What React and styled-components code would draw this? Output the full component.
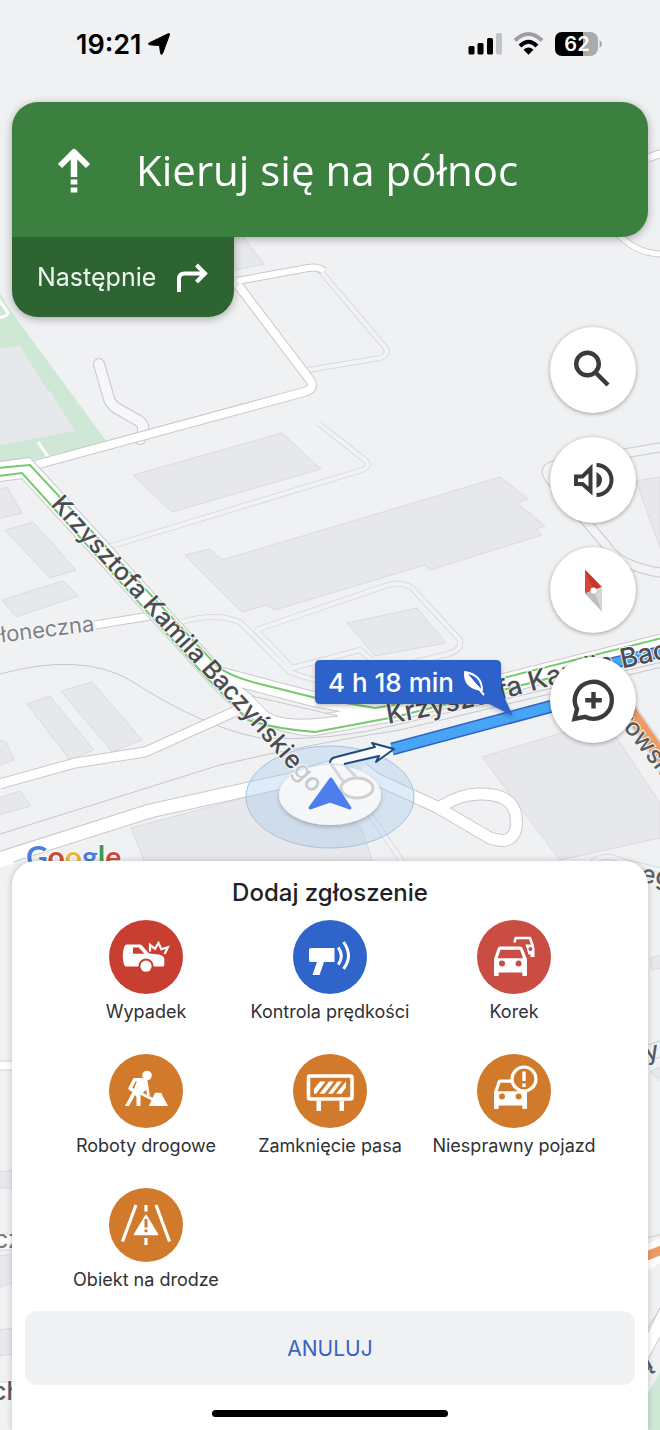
import styled, { createGlobalStyle } from "styled-components"

const GlobalStyle = createGlobalStyle`
    * {
        box-sizing: border-box;
    }
    body {
        margin: 0;
        background-color: #f0f1f3;
        font-family: Inter, "Liberation Sans", sans-serif;
    }
    h1, h2, p, ul {
        margin: 0;
        padding: 0;
        font-weight: normal;
    }
`

const Screen = styled.main`
    min-height: 100vh;
    display: flex;
    flex-direction: column;
    position: relative;
    overflow: hidden;
`

const MapLayer = styled.svg`
    position: absolute;
    top: 0;
    left: 0;
    width: 100%;
    height: 100%;
    z-index: -1;
`

const StatusBar = styled.header`
    height: 102px;
    padding: 0 58px 14px 76px;
    display: flex;
    align-items: center;
    justify-content: space-between;
    color: #000;
`

const StatusGroup = styled.div`
    display: flex;
    align-items: center;
    gap: 6px;
`

const Clock = styled.time`
    font-size: 27px;
    font-weight: 600;
`

const Directions = styled.section`
    margin: 0 12px;
    filter: drop-shadow(0 2px 4px rgba(0, 0, 0, 0.3));
`

const Maneuver = styled.div`
    height: 135px;
    padding: 0 24px 0 44px;
    display: flex;
    align-items: center;
    gap: 44px;
    border-radius: 26px 26px 26px 0;
    background-color: #3c8040;
    color: #fff;
`

const Instruction = styled.h1`
    font-family: "Open Sans", "Noto Sans", sans-serif;
    font-size: 42px;
    line-height: 52px;
`

const NextStep = styled.div`
    width: fit-content;
    height: 80px;
    padding: 0 24px 0 25px;
    display: flex;
    align-items: center;
    gap: 16px;
    border-radius: 0 0 26px 26px;
    background-color: #2e6432;
    color: #f1f8f1;
    font-size: 25px;
`

const MapControls = styled.nav`
    margin: 10px 24px 24px;
    display: flex;
    flex-direction: column;
    align-items: flex-end;
    gap: 24px;
`

const RoundButton = styled.button`
    width: 86px;
    height: 86px;
    padding: 0;
    border: none;
    border-radius: 50%;
    background-color: #fff;
    color: #3a3b3d;
    cursor: pointer;
    box-shadow: 0 1px 4px rgba(0, 0, 0, 0.35);
    svg {
        display: block;
    }
`

const Sheet = styled.section`
    margin: auto 12px 0;
    padding: 16px 13px 13px;
    display: flex;
    flex-direction: column;
    border-radius: 24px 24px 0 0;
    background-color: #fff;
    box-shadow: 0 0 6px rgba(0, 0, 0, 0.2);
`

const SheetTitle = styled.h2`
    font-size: 24px;
    line-height: 32px;
    font-weight: 500;
    text-align: center;
    color: #202124;
`

const ReportGrid = styled.ul`
    margin: 11px 29px 20px;
    display: grid;
    grid-template-columns: repeat(3, 1fr);
    row-gap: 31px;
    list-style: none;
`

const ReportButton = styled.button`
    width: 100%;
    padding: 0;
    border: none;
    background: none;
    display: flex;
    flex-direction: column;
    align-items: center;
    gap: 7px;
    font-family: inherit;
    font-size: 18px;
    line-height: 22px;
    white-space: nowrap;
    color: #303134;
    cursor: pointer;
`

const ReportIcon = styled.span`
    width: 74px;
    height: 74px;
    border-radius: 50%;
    background-color: ${props => props.$bg};
    color: ${props => props.$bg};
    svg {
        display: block;
    }
`

const CancelButton = styled.button`
    height: 74px;
    border: none;
    border-radius: 12px;
    background-color: #f0f1f3;
    color: #3863c2;
    font-family: inherit;
    font-size: 21px;
    text-transform: uppercase;
    cursor: pointer;
`

const HomeIndicator = styled.div`
    width: 236px;
    height: 7px;
    margin: 25px auto 0;
    border-radius: 4px;
    background-color: #000;
`

const buildings = [
    "235,238 244,238 264,264 235,270",
    "133,475 282,433 321,469 172,512",
    "185,555 210,549 222,560 500,477 528,499 517,503 545,526 536,529 542,535 430,570 425,565 275,610 267,605 242,612",
    "347,623 417,608 446,643 375,656",
    "482,757 605,720 660,803 660,838 560,860",
    "636,481 660,477 660,548",
    "-2,490 7,487 22,513 -2,519",
    "5,530 33,522 76,570 50,578",
    "2,600 63,581 78,596 16,617",
    "27,704 50,696 94,750 70,760",
    "61,691 92,682 142,740 112,752",
    "-2,798 20,791 31,806 -2,815",
    "-2,740 6,742 14,760 -2,766",
    "131,828 300,783 362,828 375,870 148,870",
    "650,958 662,955 662,968 652,970",
    "650,1072 662,1066 662,1082",
    "-2,1172 14,1170 14,1188 -2,1188",
    "-2,1256 14,1254 14,1282 -2,1288",
    "-2,1330 14,1328 14,1354 -2,1356",
]

// narrow service roads, drawn as two thin lines
const lanes = [
    "M318 268 L384 346 Q391 354 380 358 L308 370",
    "M318 423 L365 460 Q372 466 362 470 L105 548",
    "M182 622 Q215 612 240 622 L290 672 Q320 684 345 682",
    "M256 630 L385 586 Q400 580 412 588 L460 640 Q462 650 448 654 L375 672",
    "M256 630 L292 668 L360 650 L372 660",
    "M335 770 L360 800 L408 870",
    "M590 866 Q600 850 625 862 L660 870",
]

const roads = [
    { d: "M237 281 L308 268 Q318 266 324 271", w: 6 },
    { d: "M238 285 L310 380 Q316 389 304 392 L35 465", w: 8 },
    { d: "M648 158 L662 153", w: 7 },
    { d: "M616 232 Q636 254 662 254", w: 5 },
    { d: "M95 625 L150 616", w: 7 },
    { d: "M0 784 L75 763 L145 752 L236 711", w: 9 },
    { d: "M-4 860 L150 811 L290 780 L345 763", w: 13 },
    { d: "M362 768 L376 779 L437 807 L490 838 Q512 846 516 828 Q520 794 482 794 Q462 793 440 807", w: 11 },
]

const rails = [
    "M0 674 Q80 652 130 680 Q200 726 260 738 Q330 742 400 724 L662 662",
    "M0 834 L220 765 Q320 742 400 730 L662 667",
    "M640 1066 L662 1056 M640 1048 L662 1040 M640 1240 L662 1234 M646 1330 L662 1306",
]

const MapView = () => (
    <MapLayer viewBox="0 0 660 1430" preserveAspectRatio="xMidYMin slice" aria-hidden="true">
        <defs>
            <path id="street-down" d="M50 505 L206 676 Q250 722 365 855" />
            <path id="street-up" d="M388 724 Q450 713 508 698 Q580 676 700 652" />
            <filter id="puck-shadow" x="-20%" y="-20%" width="140%" height="150%">
                <feDropShadow dx="0" dy="2" stdDeviation="2" floodOpacity="0.25" />
            </filter>
        </defs>
        <rect width="660" height="1430" fill="#f0f1f3" />
        <path d="M-2 290 L10 310 L107 442 L-2 468 Z" fill="#cfe7d5" />
        <path d="M-2 349 L20 346 L47 390 L50 391 L75 431 L-2 446 Z" fill="#e7e8eb" />
        <path d="M-2 298 L8 313 Q8 316 -2 318 M38 442 L51 461" fill="none" stroke="#fff" strokeWidth="3" />
        <g fill="#e7e8eb" stroke="#dadbdf">
            {buildings.map(points => <polygon key={points} points={points} />)}
        </g>
        <g fill="none" stroke="#c6c7cb">
            {rails.map(d => <path key={d} d={d} />)}
        </g>
        <g fill="none" strokeLinejoin="round">
            {lanes.map(d => <path key={d} d={d} stroke="#d9dbdf" strokeWidth="6" />)}
            {lanes.map(d => <path key={d + "fill"} d={d} stroke="#f2f3f5" strokeWidth="4" />)}
        </g>
        <g fill="none" strokeLinejoin="round">
            <path d="M99 364 L109 399 Q111 405 118 409 L139 421 Q147 427 140 439" stroke="#c8c9cd" strokeWidth="12" strokeLinecap="round" />
            <path d="M99 364 L109 399 Q111 405 118 409 L139 421 Q147 427 140 439" stroke="#f6f7f8" strokeWidth="10" strokeLinecap="round" />
            <path d="M662 447 L552 466 Q543 469 549 478 L606 545 Q618 566 662 573" stroke="#c8c9cd" strokeWidth="10" />
            <path d="M662 447 L552 466 Q543 469 549 478 L606 545 Q618 566 662 573" stroke="#f2f3f5" strokeWidth="8" />
            {roads.map(({ d, w }) => <path key={d} d={d} stroke="#c8c9cd" strokeWidth={w + 2} />)}
            {roads.map(({ d, w }) => <path key={d + "fill"} d={d} stroke="#fff" strokeWidth={w} />)}
        </g>

        <path d="M-4 472 L26 468 L215 675 Q255 722 312 726 L390 712 L662 644" fill="none" stroke="#c8c9cd" strokeWidth="21" />
        <path d="M218 674 L313 699 L385 712" fill="none" stroke="#c8c9cd" strokeWidth="16" />
        <path d="M-4 472 L26 468 L215 675 Q255 722 312 726 L390 712 L662 644" fill="none" stroke="#fff" strokeWidth="19" />
        <path d="M218 674 L313 699 L385 712" fill="none" stroke="#fff" strokeWidth="14" />
        <path d="M252 696 L338 716 Q285 724 268 712 Z" fill="#f0f1f3" stroke="#c8c9cd" />
        <g fill="none" stroke="#74cb6e" strokeWidth="2">
            <path d="M-2 468 L30 465 L216 665 Q228 676 260 684 L316 698 L375 708 L400 704 L662 638" />
            <path d="M-2 476 L22 473 L206 677 L248 720 Q275 729 315 732 L395 717 L662 650" />
        </g>
        <path d="M-4 862 L12 857" stroke="#fff" strokeWidth="13" />

        <path d="M392 749 L560 704" stroke="#2f62c4" strokeWidth="13" />
        <path d="M392 749 L560 704" stroke="#48a5f5" strokeWidth="10" />
        <path d="M600 666 L664 651" stroke="#2f62c4" strokeWidth="12" />
        <path d="M600 666 L664 651" stroke="#48a5f5" strokeWidth="9" />

        <path d="M622 700 L668 766" stroke="#d9d9dc" strokeWidth="17" />
        <path d="M622 700 L668 766" stroke="#ee9a62" strokeWidth="13" />
        <path d="M640 1262 L664 1248" stroke="#fff" strokeWidth="22" />
        <path d="M644 1257 L664 1249" stroke="#ee9a62" strokeWidth="9" />
        <path d="M644 1366 L664 1330 L664 1300 L644 1340 Z" fill="#fff" stroke="#c8c9cd" />
        <path d="M644 1400 L664 1366 V1432 H644 Z" fill="#cfe7d5" />
        <path d="M-2 1061 H14 V1070 H-2 Z M-2 1234 H14 V1250 H-2 Z M-2 1382 H14 V1398 H-2 Z" fill="#fff" stroke="#d0d1d5" />

        <ellipse cx="330" cy="797" rx="84" ry="51" fill="#a8cbec" fillOpacity="0.38" stroke="#a5c1df" />
        <ellipse cx="330" cy="795" rx="51" ry="30" fill="#f9fafb" fillOpacity="0.93" filter="url(#puck-shadow)" />
        <g fill="none">
            <path d="M331 764 L345 784 M344 764 L356 777" stroke="#d5d6d9" strokeWidth="3" />
            <ellipse cx="357" cy="788" rx="16" ry="10" stroke="#cfd0d3" strokeWidth="3" fill="#fafafa" />
        </g>
        <path d="M330 763 Q330 758 336 757 L375 747 L372 743 L394 749 L376 762 L379 756 L344 764" fill="#fff" fillOpacity="0.85" stroke="#1f4b7c" strokeWidth="2" strokeLinejoin="round" />

        <g fontFamily='Inter, "Liberation Sans", sans-serif' fontSize="25" fontWeight="500" stroke="#f7f8f9" strokeWidth="2" paintOrder="stroke">
            <text fill="#4a4c50">
                <textPath href="#street-down">Krzysztofa Kamila Baczyńskie<tspan fill="#c9cacd">go</tspan></textPath>
            </text>
            <text fontSize="27" fill="#4a4c50">
                <textPath href="#street-up">Krzysztofa Kamila Bac</textPath>
            </text>
            <text x="95" y="631" textAnchor="end" fontSize="22" fontWeight="400" fill="#7d8084" transform="rotate(-7 95 631)">Słoneczna</text>
            <text x="617" y="720" fill="#5b5d61" transform="rotate(52 617 720)">rowska</text>
            <text x="640" y="882" fill="#5b5d61" transform="rotate(8 640 882)">eg</text>
            <text x="640" y="1062" fill="#5b5d61" transform="rotate(-12 640 1062)">ły</text>
            <text x="-6" y="1248" fontWeight="400" fill="#77797d">cz</text>
            <text x="-8" y="1400" fill="#5b5d61">ch</text>
            <text x="642" y="1374" fill="#5b5d61" transform="rotate(-30 642 1374)">ą</text>
        </g>
        <text x="26" y="868" fontFamily="Lato, sans-serif" fontSize="30" fontWeight="700" stroke="#fff" strokeWidth="2" paintOrder="stroke">
            <tspan fill="#4a7fe0">G</tspan>
            <tspan fill="#d0493c">o</tspan>
            <tspan fill="#e8b93c">o</tspan>
            <tspan fill="#4a7fe0">g</tspan>
            <tspan fill="#3f9a55">l</tspan>
            <tspan fill="#d0493c">e</tspan>
        </text>

        <path d="M331 779 L350 808 L330 801 L310 808 Z" fill="#4d7fec" stroke="#4d7fec" strokeWidth="3" strokeLinejoin="round" />

        <g filter="url(#puck-shadow)">
            <path d="M320 660 H496 Q501 660 501 665 V690 L513 716 L489 704 H320 Q315 704 315 699 V665 Q315 660 320 660 Z" fill="#2f62cb" />
        </g>
        <text x="328" y="692" fontFamily='Inter, "Liberation Sans", sans-serif' fontSize="26" fontWeight="500" fill="#fff">4 h 18 min</text>
        <path d="M465 672 Q482 675 482 690 Q464 688 465 672 Z M466 673 L484 695" fill="none" stroke="#fff" strokeWidth="2" strokeLinejoin="round" />
        <path d="M465 672 Q464 688 482 690 Z" fill="#fff" />
    </MapLayer>
)

const CarFront = ({ x = 0, y = 0 }) => (
    <g transform={`translate(${x} ${y})`}>
        <path fill="#fff" fillRule="evenodd" d="M23 26.5 H43 Q45 26.5 45.7 28.5 L50 39 V55 Q50 56 49 56 H46.3 Q45.3 56 45.3 55 V52.6 H21.7 V55 Q21.7 56 20.7 56 H18 Q17 56 17 55 V39 L20.6 28.5 Q21.3 26.5 23 26.5 Z M23.6 29.8 L20.6 38.2 H46 L43 29.8 Z" />
        <circle cx="25" cy="43.6" r="3" fill="currentColor" />
        <circle cx="41.6" cy="43.6" r="3" fill="currentColor" />
    </g>
)

const CrashIcon = () => (
    <svg width="74" height="74" viewBox="0 0 74 74" fill="none">
        <path fill="#fff" d="M17 24.5 H31 Q32 24.5 33 25.5 L40 33.5 L50 34.5 Q55 35.5 55.3 39 V45 Q55.3 46.6 53.5 46.6 H17 Q14 46 13.8 36 Q14 26.5 17 24.5 Z" />
        <path fill="currentColor" d="M24 27.6 H29.6 L35.5 33.8 H24 Z" />
        <circle cx="37" cy="46.2" r="7.6" fill="currentColor" />
        <circle cx="37" cy="46.2" r="5.6" fill="#fff" />
        <path stroke="#fff" strokeWidth="2.2" d="M41 31.5 V24.8 L46 28.8 L49.5 23 L52.3 29.2 L58.8 27.2 L55.6 34" />
    </svg>
)

const SpeedGunIcon = () => (
    <svg width="74" height="74" viewBox="0 0 74 74" fill="none">
        <path fill="#fff" d="M18 28 H41.5 V42 H31 L26.5 55 H19.5 L24 42 H18 Q16 42 16 40 V30 Q16 28 18 28 Z" />
        <path stroke="#fff" strokeWidth="3" d="M45.2 27.5 Q51.5 36 45.2 44.5 M50.5 22 Q60.5 36 50.5 48.8" />
    </svg>
)

const TrafficIcon = () => (
    <svg width="74" height="74" viewBox="0 0 74 74" fill="none">
        <path stroke="#fff" strokeWidth="2.6" strokeLinejoin="round" d="M37.6 22.5 L38.6 18 H53 L56 27" />
        <path fill="#fff" d="M48.5 24.5 H55.6 L57.5 28 V37 H53.5 V34.5 H51.5 Z" />
        <circle cx="53.4" cy="29" r="2" fill="currentColor" />
        <CarFront />
    </svg>
)

const RoadworksIcon = () => (
    <svg width="74" height="74" viewBox="0 0 74 74" fill="none">
        <circle cx="38" cy="21.5" r="4.8" fill="#fff" />
        <path stroke="#fff" strokeWidth="3.4" strokeLinejoin="round" strokeLinecap="round" d="M33 25.8 H25.5 L21 34.5 L26 37.5" />
        <path fill="#fff" d="M29 24.5 L38.5 25.5 L38 35 L31.5 41 V52 H27.5 V43 L26 41 L20 52 H16 L24.5 36 Z" />
        <path stroke="#fff" strokeWidth="2.6" d="M37.5 28 L39.5 42 M31 39 L47 47" />
        <path fill="#fff" d="M40 52 L46 38.7 H52 L59 52 Z" />
    </svg>
)

const BarrierIcon = () => (
    <svg width="74" height="74" viewBox="0 0 74 74" fill="none">
        <rect x="15.5" y="22" width="43.5" height="23" rx="1.5" stroke="#fff" strokeWidth="3.6" />
        <path fill="#fff" d="M21 39.8 V35 L27 27.5 H32.5 L23 39.8 Z M26.5 39.8 L36 27.5 H41 L31.5 39.8 Z M35 39.8 L44.5 27.5 H49 L39.5 39.8 Z M43 39.8 L53 27.5 V33.5 L48.5 39.8 Z M23.5 47 H28 V57 H23.5 Z M46.5 47 H51 V57 H46.5 Z" />
    </svg>
)

const BreakdownIcon = () => (
    <svg width="74" height="74" viewBox="0 0 74 74" fill="none">
        <CarFront x={0} y={-1} />
        <circle cx="47" cy="25" r="12" fill="currentColor" stroke="#fff" strokeWidth="3.2" />
        <path fill="#fff" d="M45.3 17.5 H48.7 V27 H45.3 Z M45.3 29.6 H48.7 V33 H45.3 Z" />
    </svg>
)

const ObstacleIcon = () => (
    <svg width="74" height="74" viewBox="0 0 74 74" fill="none">
        <path stroke="#fff" strokeWidth="3.2" d="M27 17 L13.5 53.5 M47 17 L60.5 53.5 M37 17 V23.5 M37 50 V57" />
        <path fill="#fff" stroke="#fff" strokeWidth="1.6" strokeLinejoin="round" d="M37 27.5 L48.5 46.5 H25.5 Z" />
        <path fill="currentColor" d="M35.5 31 H38.5 V39.5 H35.5 Z M35.5 41.5 H38.5 V44.3 H35.5 Z" />
    </svg>
)

const reports = [
    { label: "Wypadek", bg: "#c83e31", Icon: CrashIcon },
    { label: "Kontrola prędkości", bg: "#2f64cb", Icon: SpeedGunIcon },
    { label: "Korek", bg: "#c94d42", Icon: TrafficIcon },
    { label: "Roboty drogowe", bg: "#d27a2b", Icon: RoadworksIcon },
    { label: "Zamknięcie pasa", bg: "#d27a2b", Icon: BarrierIcon },
    { label: "Niesprawny pojazd", bg: "#d27a2b", Icon: BreakdownIcon },
    { label: "Obiekt na drodze", bg: "#d27a2b", Icon: ObstacleIcon },
]

const StatusIcons = () => (
    <svg width="134" height="26" viewBox="0 0 134 26" aria-hidden="true">
        <rect x="0.5" y="15" width="6" height="8.5" rx="1.5" />
        <rect x="9.5" y="12" width="6" height="11.5" rx="1.5" />
        <rect x="19" y="7" width="6" height="16.5" rx="1.5" />
        <rect x="28" y="2" width="6" height="21.5" rx="1.5" fill="#c3c4c6" />
        <g fill="none" strokeWidth="4">
            <path d="M47 9.5 Q60.5 -3.5 74 9.5" stroke="#9c9da0" />
            <path d="M52 15 Q60.5 6.5 69 15" stroke="#000" />
        </g>
        <path d="M55.5 18.8 Q60.5 14 65.5 18.8 L60.5 23.8 Z" />
        <rect x="87" y="1" width="43" height="24" rx="7.5" fill="#a9aaac" />
        <path d="M94.5 1 H115 V25 H94.5 Q87 25 87 17.5 V8.5 Q87 1 94.5 1 Z" />
        <path d="M131.5 9 Q134 10.5 134 13 Q134 15.5 131.5 17 Z" fill="#a9aaac" />
        <text x="109" y="20" textAnchor="middle" fontSize="20" fontWeight="600" fill="#fff">62</text>
    </svg>
)

const App = () => {
    return (
        <Screen>
            <GlobalStyle />
            <MapView />
            <StatusBar>
                <StatusGroup>
                    <Clock>19:21</Clock>
                    <svg width="22" height="22" viewBox="0 0 22 22" aria-hidden="true">
                        <path d="M20 0.8 Q22 0 21.4 2 L14.6 20.4 Q13.6 22.6 12.6 20.4 L11.6 13.4 Q11.4 12.6 10.6 12.5 L1.6 11.8 Q-0.6 11.2 1.4 9.8 Z" stroke="#000" strokeLinejoin="round" />
                    </svg>
                </StatusGroup>
                <StatusIcons />
            </StatusBar>

            <Directions>
                <Maneuver>
                    <svg width="36" height="50" viewBox="0 0 36 50" fill="none" aria-hidden="true">
                        <path stroke="#fff" strokeWidth="6.5" d="M18 6 V32" />
                        <path stroke="#fff" strokeWidth="6" strokeLinejoin="round" d="M4 21 L18 7 L32 21" />
                        <path fill="#fff" d="M14.7 34.6 H21.3 V39.4 H14.7 Z M14.7 42.6 H21.3 V47.6 H14.7 Z" />
                    </svg>
                    <Instruction>Kieruj się na północ</Instruction>
                </Maneuver>
                <NextStep>
                    <span>Następnie</span>
                    <svg width="38" height="32" viewBox="0 0 38 32" fill="none" aria-hidden="true">
                        <path stroke="#fff" strokeWidth="4" d="M7 31 V18 Q7 12.5 12.5 12.5 H33 M24.5 4 L33 12.5 L24.5 21" />
                    </svg>
                </NextStep>
            </Directions>

            <MapControls>
                <RoundButton aria-label="Szukaj">
                    <svg width="86" height="86" viewBox="0 0 86 86" fill="none" stroke="currentColor" strokeWidth="4.4">
                        <circle cx="37.5" cy="37" r="11.3" />
                        <path d="M45.5 45.5 L58 58" />
                    </svg>
                </RoundButton>
                <RoundButton aria-label="Dźwięk">
                    <svg width="86" height="86" viewBox="0 0 86 86" fill="none">
                        <path stroke="currentColor" strokeWidth="4" d="M26 39.5 H32.5 L40.5 31.5 V54 L32.5 47 H26 Z" />
                        <path stroke="currentColor" strokeWidth="4" d="M46.5 28 A15 15 0 0 1 46.5 58" />
                        <path fill="currentColor" d="M46.5 35 Q52 38 52 43 Q52 48 46.5 51 Z" />
                    </svg>
                </RoundButton>
                <RoundButton aria-label="Kompas">
                    <svg width="86" height="86" viewBox="0 0 86 86">
                        <path fill="#c5362b" d="M35 22.5 L52 40 L35 46.5 Z" />
                        <path fill="#d94538" d="M35 22.5 L43.5 43 L35 46.5 Z" />
                        <path fill="#d5d6d7" d="M35 46.5 L52 40 V64.5 Z" />
                        <path fill="#bdbebf" d="M35 46.5 L43.5 43 L52 64.5 Z" />
                        <circle cx="43.5" cy="43.5" r="3" fill="#fff" />
                    </svg>
                </RoundButton>
                <RoundButton aria-label="Dodaj zgłoszenie">
                    <svg width="86" height="86" viewBox="0 0 86 86" fill="none" stroke="currentColor" strokeWidth="4.4">
                        <path strokeLinejoin="miter" d="M24.5 62 L27 52 A18.5 18.5 0 1 1 35 59.8 Z" />
                        <path d="M43.5 35 V51.5 M35.2 43.2 H51.8" />
                    </svg>
                </RoundButton>
            </MapControls>

            <Sheet>
                <SheetTitle>Dodaj zgłoszenie</SheetTitle>
                <ReportGrid>
                    {reports.map(({ label, bg, Icon }) => (
                        <li key={label}>
                            <ReportButton>
                                <ReportIcon $bg={bg}>
                                    <Icon />
                                </ReportIcon>
                                {label}
                            </ReportButton>
                        </li>
                    ))}
                </ReportGrid>
                <CancelButton>Anuluj</CancelButton>
                <HomeIndicator />
            </Sheet>
        </Screen>
    )
}

export default App
